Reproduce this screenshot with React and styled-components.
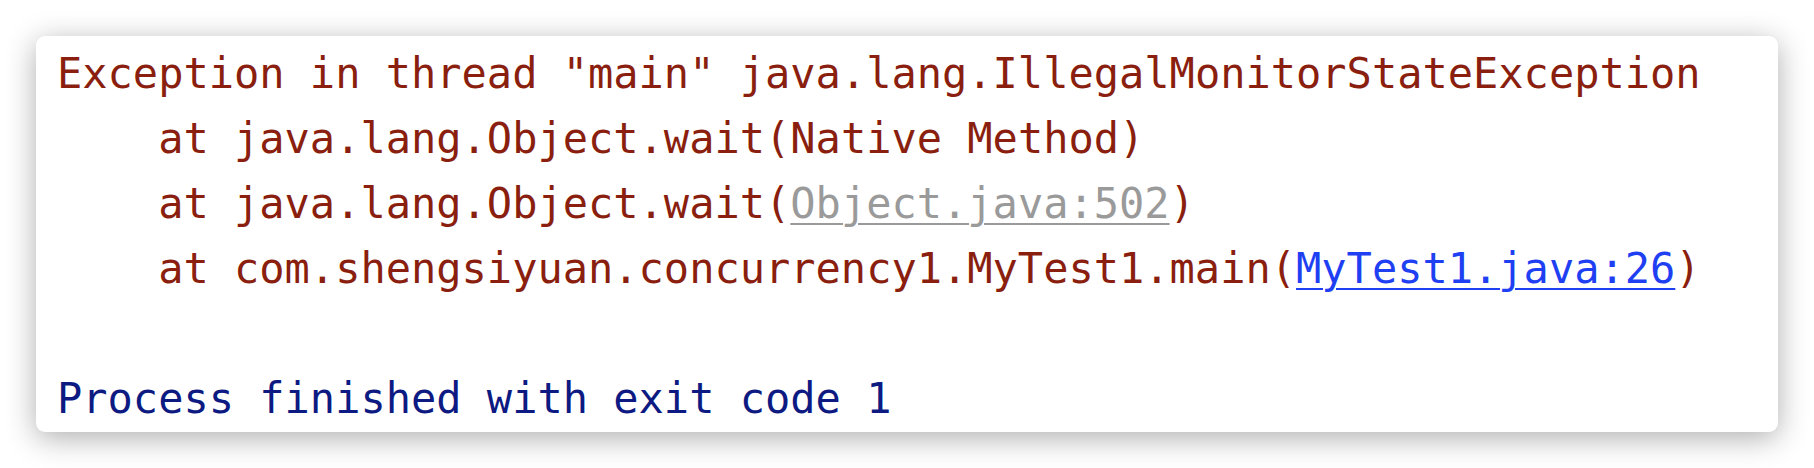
import React from 'react';
import styled, { createGlobalStyle } from 'styled-components';

const GlobalStyle = createGlobalStyle`
	html, body {
		margin: 0;
		padding: 0;
		background: #ffffff;
	}
`;

const Page = styled.div`
	padding: 36px;
	box-sizing: border-box;
	width: 1814px;
	height: 468px;
`;

const Console = styled.div`
	background: #fff;
	border-radius: 9px;
	box-shadow: 0 6px 30px rgba(0, 0, 0, 0.32);
	padding: 5px 20px 1px 21px;
	height: 396px;
	box-sizing: border-box;
	font-family: "DejaVu Sans Mono", "Liberation Mono", monospace;
	font-size: 42px;
	line-height: 65px;
	white-space: pre;
`;

const tones = {
	error: '#8a1f10',
	info: '#0d1a82',
};

const Line = styled.div`
	color: ${p => tones[p.tone] || tones.error};
	padding-left: ${p => (p.indent ? '4ch' : '0')};
	height: 65px;
`;

const Link = styled.span`
	color: ${p => (p.muted ? '#9a9a9a' : '#1f3ff2')};
	text-decoration: underline;
	text-decoration-thickness: 2px;
	text-underline-offset: 5px;
`;

const Frame = ({ method, children }) => (
	<Line indent>
		at {method}({children})
	</Line>
);

function App() {
	return (
		<Page>
			<GlobalStyle />
			<Console>
				<Line>Exception in thread "main" java.lang.IllegalMonitorStateException</Line>
				<Frame method="java.lang.Object.wait">Native Method</Frame>
				<Frame method="java.lang.Object.wait">
					<Link muted>Object.java:502</Link>
				</Frame>
				<Frame method="com.shengsiyuan.concurrency1.MyTest1.main">
					<Link>MyTest1.java:26</Link>
				</Frame>
				<Line />
				<Line tone="info">Process finished with exit code 1</Line>
			</Console>
		</Page>
	);
}

export default App;
